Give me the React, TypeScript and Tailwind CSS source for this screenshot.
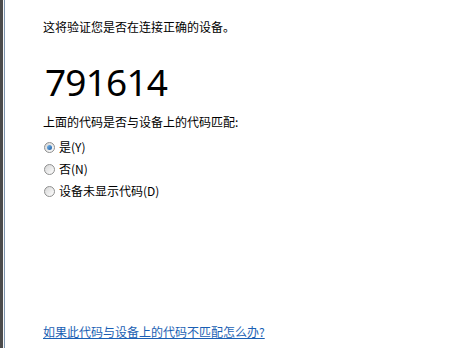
const font = { fontFamily: '"Noto Sans CJK SC", "Noto Sans", sans-serif' };

type Choice = { id: string; label: string; checked?: boolean };

const choices: Choice[] = [
  { id: "yes", label: "是(Y)", checked: true },
  { id: "no", label: "否(N)" },
  { id: "none", label: "设备未显示代码(D)" },
];

function Radio({ checked }: { checked?: boolean }) {
  return (
    <span className="flex h-[11px] w-[11px] shrink-0 items-center justify-center rounded-full border border-[#8e8f8f] bg-gradient-to-br from-[#d6d6d6] to-[#ffffff]">
      {checked && (
        <span className="h-[5px] w-[5px] rounded-full bg-gradient-to-br from-[#7ab8e8] to-[#1c5fa8]" />
      )}
    </span>
  );
}

export default function App() {
  return (
    <div className="flex h-[348px] w-[458px] bg-white text-black" style={font}>
      <div className="w-[3px] shrink-0 bg-[#4b4b4b]" />
      <div className="w-[1px] shrink-0 bg-[#f4f6f8]" />
      <div className="w-[1px] shrink-0 bg-[#7c93ad]" />
      <div className="flex flex-1 flex-col pl-[38px] pt-[18px] pb-[7px]">
        <p className="text-[12px] leading-[18px]">这将验证您是否在连接正确的设备。</p>
        <p
          className="ml-[2px] mt-[24px] text-[37px] leading-[44px] tracking-[-0.8px]"
          style={{ fontFamily: '"Noto Sans", sans-serif' }}
        >
          791614
        </p>
        <p className="mt-[9px] text-[12px] leading-[18px]">上面的代码是否与设备上的代码匹配:</p>
        <div className="mt-[7px] flex flex-col gap-[4px]">
          {choices.map((c) => (
            <label key={c.id} className="flex h-[18px] items-center gap-[4px] pl-[1px] text-[12px]">
              <Radio checked={c.checked} />
              <span>{c.label}</span>
            </label>
          ))}
        </div>
        <div className="flex-1" />
        <a className="text-[12px] leading-[18px] text-[#1a5fb4] underline">
          如果此代码与设备上的代码不匹配怎么办?
        </a>
      </div>
    </div>
  );
}
